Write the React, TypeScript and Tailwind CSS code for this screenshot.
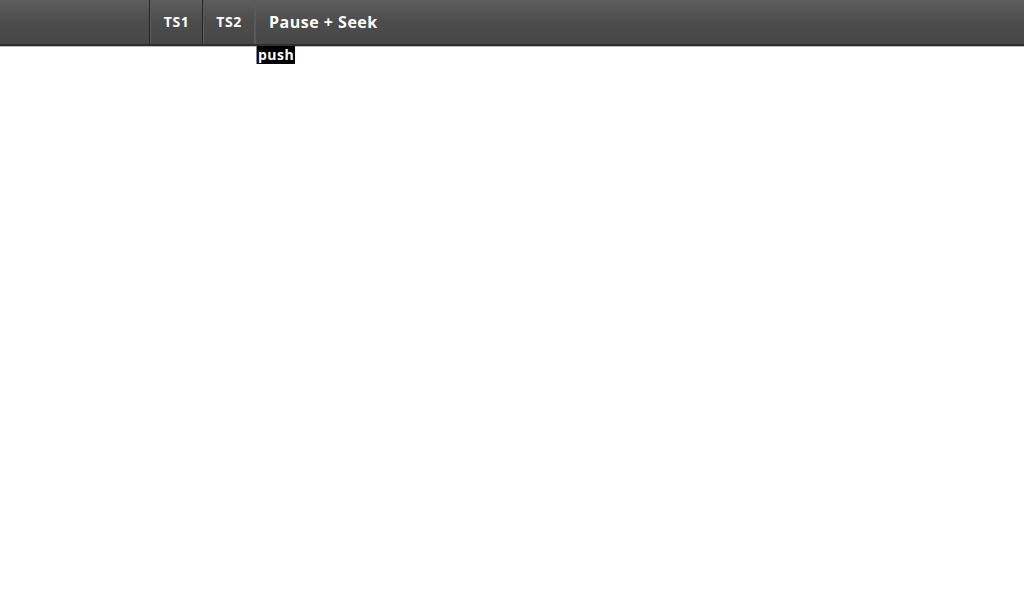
import React from "react";

export default function App() {
  return (
    <div className="w-[1024px] h-[600px] bg-white font-['Open_Sans',sans-serif] overflow-hidden">
      <div className="flex h-[46px] bg-gradient-to-b from-[#5e5e5e] via-[#4c4c4c] to-[#474747] border-b-2 border-[#2e2e2e] shadow-[0_1px_0_#bdbdbd]">
        <div className="w-[150px] border-r border-[#262626]" />
        <div className="w-[53px] flex items-center justify-center border-l border-[#5c5c5c] border-r border-r-[#262626] text-white text-[14px] font-bold tracking-[0.6px] pb-[1px]">
          TS1
        </div>
        <div className="w-[53px] flex items-center justify-center border-l border-[#5c5c5c] border-r-2 border-r-[#5a5a5a] text-white text-[14px] font-bold tracking-[0.6px] pb-[1px]">
          TS2
        </div>
        <div className="relative flex items-center pl-[13px] text-white text-[16px] font-bold tracking-[0.5px] pb-[1px]">
          Pause + Seek
          <span className="absolute left-0 top-[46px] bg-black text-white text-[14px] font-bold leading-[18px] pl-[1px] pr-[1px] border-l border-[#888]">
            push
          </span>
        </div>
      </div>
    </div>
  );
}
